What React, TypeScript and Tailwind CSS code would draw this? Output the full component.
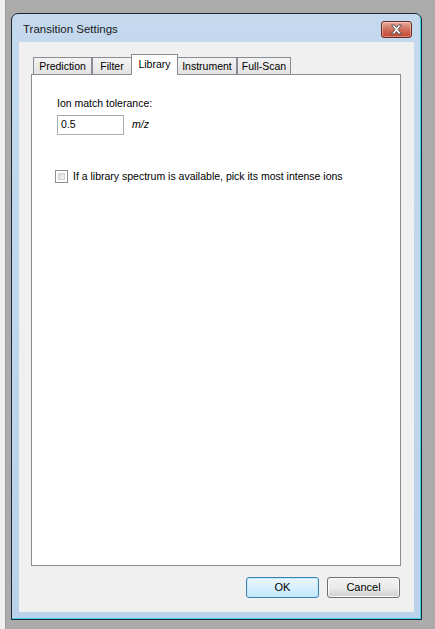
import React from "react";

const tabs = [
  { name: "Prediction", w: "w-[59px]" },
  { name: "Filter", w: "w-[40px]" },
  { name: "Library", w: "w-[47px]", active: true },
  { name: "Instrument", w: "w-[60px]" },
  { name: "Full-Scan", w: "w-[54px]" },
];

function CloseButton() {
  return (
    <div className="flex h-[17px] w-[31px] items-center justify-center rounded-[3px] border border-[#6e2a22] bg-gradient-to-b from-[#e9a99b] via-[#d0705d] to-[#c4432f] shadow-[inset_0_0_0_1px_rgba(255,255,255,0.35)]">
      <svg width="13" height="11" viewBox="0 0 13 11">
        <path
          d="M1.5 1 H4.5 L6.5 3.6 L8.5 1 H11.5 L8 5.5 L11.5 10 H8.5 L6.5 7.4 L4.5 10 H1.5 L5 5.5 Z"
          fill="#ffffff"
          stroke="#4a4a4a"
          strokeWidth="0.9"
          strokeLinejoin="round"
        />
      </svg>
    </div>
  );
}

function Tab({ name, w, active }: { name: string; w: string; active?: boolean }) {
  if (active) {
    return (
      <div
        className={`relative z-10 -mx-[1px] -mb-px flex h-[21px] ${w} items-start justify-center border border-b-0 border-[#898c95] bg-white pt-[2px] text-[10.5px] text-black`}
      >
        {name}
      </div>
    );
  }
  return (
    <div
      className={`mt-[3px] flex h-[17px] ${w} items-center justify-center border border-b-0 border-[#898c95] bg-gradient-to-b from-[#f3f3f3] to-[#e3e3e3] pt-px text-[10.5px] text-black`}
    >
      {name}
    </div>
  );
}

export default function App() {
  return (
    <div
      className="flex h-[629px] w-[435px] bg-[#ababab]"
      style={{ fontFamily: '"Liberation Sans", Arial, sans-serif' }}
    >
      <div className="h-full w-[5px] bg-[#f0f0f0]" />
      <div className="h-full w-px bg-[#9a9a9a]" />
      <div className="flex flex-1 flex-col pl-[5px] pr-[13px] pt-[13px] pb-[9px]">
        {/* window frame */}
        <div className="flex flex-1 flex-col rounded-t-[7px] border border-[#1b2733] bg-gradient-to-b from-[#c4d9ee] to-[#bad2ea] shadow-[inset_-1px_-1px_0_#3fd3ec]">
          <div className="flex h-[28px] items-center justify-between pl-[11px] pr-[9px]">
            <span className="pt-[3px] text-[11.5px] text-[#1a1a1a]">Transition Settings</span>
            <div className="pt-[2px]">
              <CloseButton />
            </div>
          </div>

          {/* client area */}
          <div className="mx-[7px] mb-[7px] flex flex-1 flex-col bg-[#f0f0f0] pl-[12px] pr-[13px] pt-[12px] pb-[14px]">
            <div className="flex pl-[2px]">
              {tabs.map((t) => (
                <Tab key={t.name} name={t.name} w={t.w} active={t.active} />
              ))}
            </div>
            <div className="flex flex-1 flex-col border border-[#898c95] bg-white pl-[25px] pt-[22px]">
              <div className="text-[10.5px] leading-[13px] text-black">Ion match tolerance:</div>
              <div className="mt-[5px] flex items-center">
                <div className="flex h-[20px] w-[67px] items-center border border-[#abadb3] border-t-[#a3a6ad] bg-white pl-[3px] text-[10.5px] text-black">
                  0.5
                </div>
                <span className="ml-[8px] text-[10.5px] italic text-black">m/z</span>
              </div>
              <div className="-ml-[2px] mt-[34px] flex items-center">
                <div className="h-[13px] w-[13px] border border-[#8f8f8f] bg-white p-[2px]">
                  <div className="h-full w-full border border-[#d0d0d0] bg-gradient-to-br from-[#dcdcdc] to-[#f4f4f4]" />
                </div>
                <span className="ml-[5px] text-[10.5px] text-black">
                  If a library spectrum is available, pick its most intense ions
                </span>
              </div>
            </div>
            <div className="mt-[11px] flex justify-end gap-[8px] pr-px">
              <button className="h-[21px] w-[73px] rounded-[3px] border border-[#3c7fb1] bg-gradient-to-b from-[#eaf6fd] via-[#d9f0fc] to-[#bee6fd] text-[11px] text-black shadow-[inset_0_0_0_1px_#c8e8f8]">
                OK
              </button>
              <button className="h-[21px] w-[73px] rounded-[3px] border border-[#707070] bg-gradient-to-b from-[#f2f2f2] via-[#ebebeb] to-[#cfcfcf] text-[11px] text-black shadow-[inset_0_0_0_1px_#fafafa]">
                Cancel
              </button>
            </div>
          </div>
        </div>
      </div>
    </div>
  );
}
